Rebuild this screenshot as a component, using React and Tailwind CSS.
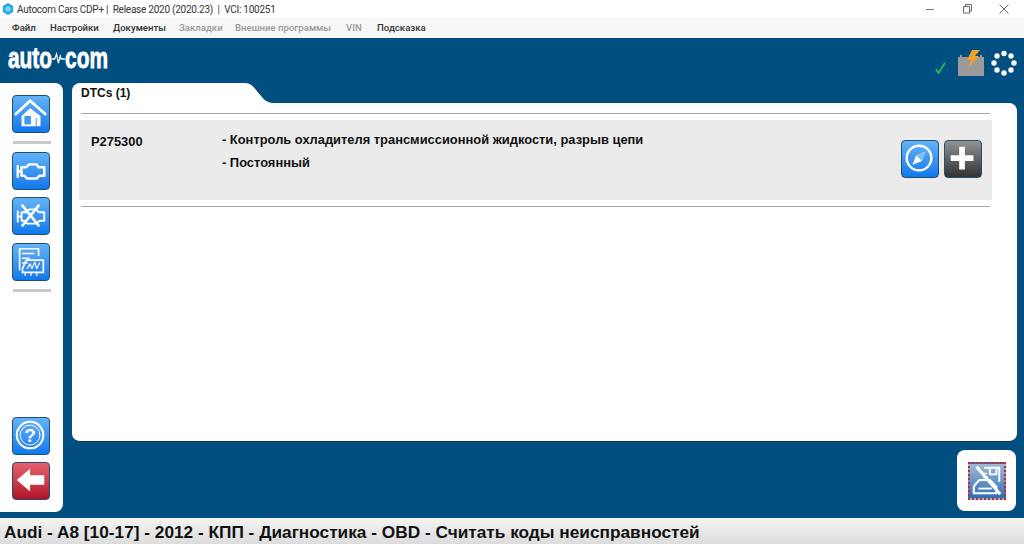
import React from 'react';

const menuItems = [
  { label: 'Файл', width: 'w-[38px]' },
  { label: 'Настройки', width: 'w-[63px]' },
  { label: 'Документы', width: 'w-[66px]' },
  { label: 'Закладки', width: 'w-[56px]', off: true },
  { label: 'Внешние программы', width: 'w-[111px]', off: true },
  { label: 'VIN', width: 'w-[31px]', off: true },
  { label: 'Подсказка', width: 'w-[60px]' },
];

const iconButton = {
  blue: 'bg-gradient-to-b from-[#62b2f5] to-[#0b78ec]',
  red: 'bg-gradient-to-b from-[#e4606e] to-[#b10d28]',
  gray: 'bg-gradient-to-b from-[#949494] to-[#333333]',
};

function IconButton({ color = 'blue', children }) {
  return (
    <div className={`flex h-[38px] w-[38px] shrink-0 items-center justify-center rounded-[4px] border border-[#24506f] ${iconButton[color]}`}>
      <svg viewBox="0 0 38 38" className="h-[36px] w-[36px]" fill="none" stroke="white" strokeLinejoin="round" strokeLinecap="round">
        {children}
      </svg>
    </div>
  );
}

function Divider() {
  return <div className="ml-[1px] h-[3px] w-[38px] bg-[#c8c8c8]" />;
}

const engine = 'M5 14v11M5 19.500h4M9 15h5l3-3h8l2 3h6v9h-5l-3 3h-10l-3-3H9z';

export default function App() {
  return (
    <div className="flex h-[544px] w-[1024px] flex-col overflow-hidden bg-white font-['Roboto','Noto_Sans',sans-serif]">
      {/* title bar */}
      <div className="flex h-[18px] items-center bg-white text-[10px] tracking-[-0.25px] text-[#333]">
        <svg viewBox="0 0 12 12" className="ml-[2px] mr-[3px] h-[12px] w-[12px]">
          <path d="M6 0l5.200 3v6L6 12 .8 9V3z" fill="#29a7e1" />
          <path d="M6 3l2.600 1.500v3L6 9 3.400 7.500v-3z" fill="#7fd0f2" />
        </svg>
        <span className="whitespace-pre">Autocom Cars CDP+ |  Release 2020 (2020.23)  |  VCI: 100251</span>
        <div className="ml-auto flex items-center">
          <svg viewBox="0 0 12 12" className="mr-[25px] h-[12px] w-[12px]" stroke="#777" fill="none">
            <path d="M2 6.500h8" />
          </svg>
          <svg viewBox="0 0 12 12" className="mr-[25px] h-[12px] w-[12px]" stroke="#666" fill="none">
            <path d="M2.500 3.500h6v6.500h-6zM4.500 3.500v-2h6v6.500h-2" />
          </svg>
          <svg viewBox="0 0 12 12" className="mr-[14px] h-[12px] w-[12px]" stroke="#666" fill="none">
            <path d="M1.500 1.500l9 9M10.500 1.500l-9 9" />
          </svg>
        </div>
      </div>

      {/* menu */}
      <div className="flex h-[20px] items-center bg-[#f6f6f6] pl-[12px] text-[9.600px] font-medium text-[#333]">
        {menuItems.map((item) => (
          <span key={item.label} className={`${item.width} whitespace-nowrap ${item.off ? 'text-[#9a9a9a]' : ''}`}>
            {item.label}
          </span>
        ))}
      </div>

      {/* blue area */}
      <div className="flex h-[480px] flex-col bg-[#004f80]">
        <div className="flex h-[45px] items-start">
          <div className="ml-[8px] mt-[4px] flex origin-left scale-x-[0.72] items-center text-[29px] leading-[32px] font-bold text-white [-webkit-text-stroke:0.8px_white] font-['Liberation_Sans',sans-serif]">
            <span>auto</span>
            <svg viewBox="0 0 14 14" className="h-[14px] w-[18px]" preserveAspectRatio="none" fill="none" stroke="white" strokeWidth="1.300">
              <path d="M0 8h3l2-5 2 9 2-7 1 3h4" />
            </svg>
            <span>com</span>
          </div>
          <div className="ml-auto mr-[7px] mt-[11px] flex items-center">
            <svg viewBox="0 0 12 12" className="mr-[11px] mt-[9px] h-[12px] w-[12px]" fill="none" stroke="#2bc25a" strokeWidth="1.500">
              <path d="M2 7l2.500 4L11 1" />
            </svg>
            <svg viewBox="0 0 28 28" className="mr-[6px] h-[28px] w-[28px]">
              <path d="M1 8h2V6h2v2h18V6h2v2h2v19H1z" fill="#9a9a9a" />
              <path d="M10 11l5-10h8l-5 6h4L11 19l3-8z" fill="#f0a32a" />
            </svg>
            <svg viewBox="0 0 26 26" className="h-[26px] w-[26px]" fill="white">
              <circle cx="13" cy="3.500" r="2.700" />
              <circle cx="20" cy="6" r="2.700" />
              <circle cx="23" cy="13" r="2.700" />
              <circle cx="20" cy="20" r="2.700" />
              <circle cx="13" cy="23" r="2.700" />
              <circle cx="6" cy="20" r="2.700" />
              <circle cx="3" cy="13" r="2.700" />
              <circle cx="6" cy="6" r="2.700" />
            </svg>
          </div>
        </div>

        <div className="flex h-[429px] gap-[9px]">
          {/* sidebar */}
          <div className="flex w-[63px] flex-col rounded-r-[8px] bg-white pl-[12px] pt-[12px] pb-[12px]">
            <IconButton>
              <path d="M9 21l9-8 11 8v11H9z" fill="white" stroke="none" />
              <rect x="12" y="21" width="7" height="9" fill="#3f9bf0" stroke="none" />
              <path d="M24 23h1v9h-1z" fill="#3f9bf0" stroke="none" />
              <path d="M3 19L18 5l16 14" strokeWidth="3" />
            </IconButton>
            <div className="mb-[8px] mt-[8px]"><Divider /></div>
            <IconButton>
              <path d={engine} strokeWidth="2.600" />
            </IconButton>
            <div className="mt-[7px]">
              <IconButton>
                <path d={engine} strokeWidth="2" />
                <path d="M10 8l17 21M27 8L10 29" strokeWidth="2.800" />
              </IconButton>
            </div>
            <div className="mt-[8px]">
              <IconButton>
                <path d="M7 5h20v7M7 5v22" strokeWidth="1.800" />
                <path d="M10 10h12M10 15h7M10 20h5" strokeWidth="1.500" />
                <path d="M14 17h18v13H10v-4z" strokeWidth="1.800" />
                <path d="M15 26l3-5 2 5 3-7 2 7 3-6" strokeWidth="1.200" />
                <path d="M13 33v-3M19 33v-3M25 33v-3" strokeWidth="1.500" />
              </IconButton>
            </div>
            <div className="mb-auto mt-[8px]"><Divider /></div>
            <IconButton>
              <circle cx="18" cy="18" r="14" strokeWidth="2.200" />
              <circle cx="18" cy="18" r="10.500" strokeWidth="1" />
              <text x="18" y="25" fontSize="20" fontWeight="700" fontFamily="Liberation Sans" textAnchor="middle" fill="white" stroke="none">?</text>
            </IconButton>
            <div className="mt-[7px]">
              <IconButton color="red">
                <path d="M4 18L18 6v7h15v10H18v7z" fill="white" stroke="none" />
              </IconButton>
            </div>
          </div>

          {/* main column */}
          <div className="flex w-[945px] flex-col">
            <div className="flex h-[20px] items-start">
              <div className="h-[20px] w-[167px] rounded-tl-[8px] bg-white pl-[9px] pt-[2px] text-[12px] font-bold leading-[16px] text-[#111] font-['Liberation_Sans',sans-serif]">
                DTCs (1)
              </div>
              <svg viewBox="0 0 36 20" className="h-[20px] w-[36px]">
                <path d="M0 0h6c8 0 11 8 17 14 3 4 7 6 13 6H0z" fill="white" />
              </svg>
            </div>
            <div className="h-[339px] rounded-b-[8px] rounded-tr-[8px] border-b border-[#0a3350] bg-white pl-[7px] pr-[25px] pt-[10px] font-['Liberation_Sans',sans-serif]">
              <div className="mx-[2px] h-px bg-[#a8a8a8]" />
              <div className="mt-[6px] flex h-[80px] bg-[#ebebeb] pl-[12px] text-[12.900px] font-bold text-[#111]">
                <div className="w-[131px] pt-[14px] leading-[16px]">P275300</div>
                <div className="pt-[12px] leading-[16px]">
                  <div>- Контроль охладителя трансмиссионной жидкости, разрыв цепи</div>
                  <div className="mt-[7px]">- Постоянный</div>
                </div>
                <div className="ml-auto mr-[10px] mt-[20px] flex gap-[5px]">
                  <IconButton>
                    <circle cx="18" cy="18" r="13" strokeWidth="2.500" />
                    <path d="M25 11l-10 4-4 10 10-4z" fill="white" stroke="none" />
                    <path d="M25 11l-10 4 6 6z" fill="#7fbdf5" stroke="none" />
                  </IconButton>
                  <IconButton color="gray">
                    <path d="M15 6h6v9h9v6h-9v9h-6v-9H6v-6h9z" fill="white" stroke="none" />
                  </IconButton>
                </div>
              </div>
              <div className="mx-[2px] mt-[6px] h-px bg-[#a8a8a8]" />
            </div>

            {/* save / print */}
            <div className="ml-auto mr-[1px] mt-[8px] flex h-[61px] w-[59px] items-center justify-center rounded-[8px] bg-white">
              <div className="flex h-[38px] w-[38px] items-center justify-center border-2 border-dotted border-[#d0202a] bg-gradient-to-b from-[#9dbbd6] to-[#2a6fb2]">
                <svg viewBox="0 0 36 36" className="h-[34px] w-[34px]" fill="none" stroke="white" strokeLinejoin="round">
                  <path d="M15 4h16v15M21 4v7h7V4" strokeWidth="2" />
                  <path d="M12 10h6M14 14h5" strokeWidth="1.400" />
                  <path d="M7 20l3-3h11l7 7v7H4v-7z" strokeWidth="2.200" />
                  <path d="M9 26h14" strokeWidth="2" />
                  <path d="M7 3l25 29" strokeWidth="3.200" />
                </svg>
              </div>
            </div>
          </div>
        </div>
      </div>

      {/* status path */}
      <div className="flex h-[26px] items-center bg-gradient-to-b from-[#f4f4f4] to-[#dcdcdc] pl-[4px] pt-[3px] text-[17.250px] font-bold whitespace-nowrap text-[#111] font-['Liberation_Sans',sans-serif]">
        Audi - A8 [10-17] - 2012 - КПП - Диагностика - OBD - Считать коды неисправностей
      </div>
    </div>
  );
}
